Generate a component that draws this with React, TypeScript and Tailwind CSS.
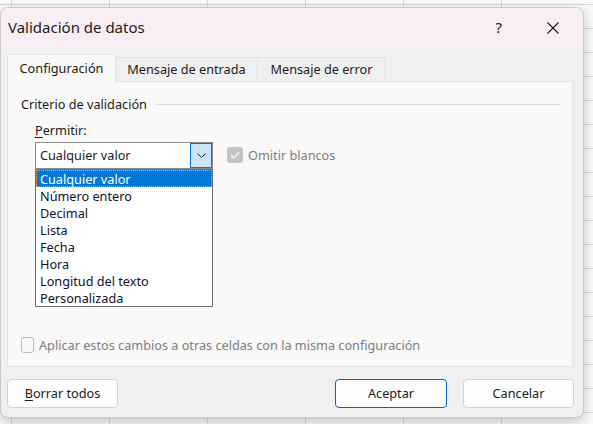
import React from 'react';

const items = [
  'Cualquier valor',
  'Número entero',
  'Decimal',
  'Lista',
  'Fecha',
  'Hora',
  'Longitud del texto',
  'Personalizada',
];

const font = "font-['Noto_Sans','Open_Sans',sans-serif]";

export default function App() {
  return (
    <div
      className={`relative h-[424px] w-[593px] overflow-hidden bg-[#fbfbfb] bg-[image:linear-gradient(to_right,#d9d9d9_1px,transparent_1px),linear-gradient(to_bottom,#d9d9d9_1px,transparent_1px)] bg-[length:98px_24px] bg-[position:11px_4px] ${font}`}
    >
      {/* Dialog */}
      <div className="mt-[7px] flex h-[411px] w-[584px] flex-col overflow-hidden rounded-[8px] border border-[#c9c9c9] bg-[#f0f0f0] shadow-[0_4px_14px_rgba(0,0,0,0.22)]">
        {/* Title bar */}
        <div className="flex h-[39px] shrink-0 items-center bg-[#f8eef3] pl-[7px] text-[15px] text-[#1b1b1b]">
          <span className="leading-none">Validación de datos</span>
          <span className="ml-auto mr-[44px] text-[15px]">?</span>
          <svg width="14" height="14" viewBox="0 0 14 14" className="mr-[23px]">
            <path d="M1.5 1.5 L12.5 12.5 M12.5 1.5 L1.5 12.5" stroke="#1b1b1b" strokeWidth="1.1" fill="none" />
          </svg>
        </div>

        {/* Body */}
        <div className="flex flex-1 flex-col px-[6px] pt-[7px]">
          {/* Tabs */}
          <div className="flex h-[27px] items-end text-[12.7px] text-[#1b1b1b]">
            <div className="relative z-10 -mb-px flex h-[28px] w-[109px] items-center justify-center border border-b-0 border-[#e2e2e2] bg-[#f9f9f9]">
              Configuración
            </div>
            <div className="flex h-[24px] w-[142px] items-center justify-center border-r border-t border-[#e2e2e2] bg-[#f0f0f0]">
              Mensaje de entrada
            </div>
            <div className="flex h-[24px] w-[128px] items-center justify-center border-r border-t border-[#e2e2e2] bg-[#f0f0f0]">
              Mensaje de error
            </div>
          </div>

          {/* Panel */}
          <div className="flex h-[286px] w-[566px] flex-col border border-[#e2e2e2] bg-[#f9f9f9] pl-[13px] text-[12.7px] text-[#1b1b1b]">
            <div className="mt-[14px] flex items-center leading-[17px]">
              <span>Criterio de validación</span>
              <div className="ml-[8px] mr-[11px] h-px flex-1 bg-[#dcdcdc]" />
            </div>

            <div className="ml-[14px] mt-[9px] leading-[17px]">
              <span className="underline underline-offset-2">P</span>ermitir:
            </div>

            <div className="ml-[14px] mt-[3px] flex items-center">
              <div className="relative flex h-[27px] w-[178px] items-center border border-[#8c8c8c] bg-white">
                <span className="pl-[4px] pt-[1px]">Cualquier valor</span>
                <div className="ml-auto flex h-[25px] w-[22px] items-center justify-center border border-[#0078d4] bg-[#cce4f7]">
                  <svg width="9" height="5" viewBox="0 0 9 5">
                    <path d="M0.5 0.5 L4.5 4.5 L8.5 0.5" stroke="#333" strokeWidth="1" fill="none" />
                  </svg>
                </div>

                {/* Dropdown list */}
                <div className="absolute left-[-1px] top-[26px] z-20 h-[138px] w-[178px] border border-[#6e6e6e] bg-white leading-[17px] text-[#12122a]">
                  {items.map((item, i) => (
                    <div
                      key={item}
                      className={
                        i === 0
                          ? 'h-[17px] border border-dotted border-[#f3a64b] bg-[#0078d7] pl-[3px] leading-[16px] text-white'
                          : 'h-[17px] pl-[4px] leading-[18px]'
                      }
                    >
                      {item}
                    </div>
                  ))}
                </div>
              </div>

              <div className="ml-[14px] flex items-center text-[#7e7e7e]">
                <div className="flex h-[16px] w-[16px] items-center justify-center rounded-[3px] bg-[#c4c4c4]">
                  <svg width="10" height="8" viewBox="0 0 10 8">
                    <path d="M1 4 L3.8 6.8 L9 1.2" stroke="#fff" strokeWidth="1.2" fill="none" />
                  </svg>
                </div>
                <span className="ml-[5px]">Omitir blancos</span>
              </div>
            </div>

            <div className="mb-[11px] mt-auto flex items-center text-[#7e7e7e]">
              <div className="h-[16px] w-[13px] rounded-[3px] border border-[#bdbdbd] bg-[#f9f9f9]" />
              <span className="ml-[5px]">Aplicar estos cambios a otras celdas con la misma configuración</span>
            </div>
          </div>

          {/* Buttons */}
          <div className="mt-[12px] flex text-[12.7px] text-[#1b1b1b]">
            <button className="h-[29px] w-[111px] rounded-[4px] border border-[#d3d3d3] bg-[#fdfdfd] pt-[1px]">
              <span className="underline underline-offset-2">B</span>orrar todos
            </button>
            <button className="ml-auto h-[29px] w-[112px] rounded-[4px] border border-[#0067c0] bg-[#fdfdfd] pt-[1px]">
              Aceptar
            </button>
            <button className="ml-[16px] mr-[3px] h-[29px] w-[111px] rounded-[4px] border border-[#d3d3d3] bg-[#fdfdfd] pt-[1px]">
              Cancelar
            </button>
          </div>
        </div>
      </div>
    </div>
  );
}
